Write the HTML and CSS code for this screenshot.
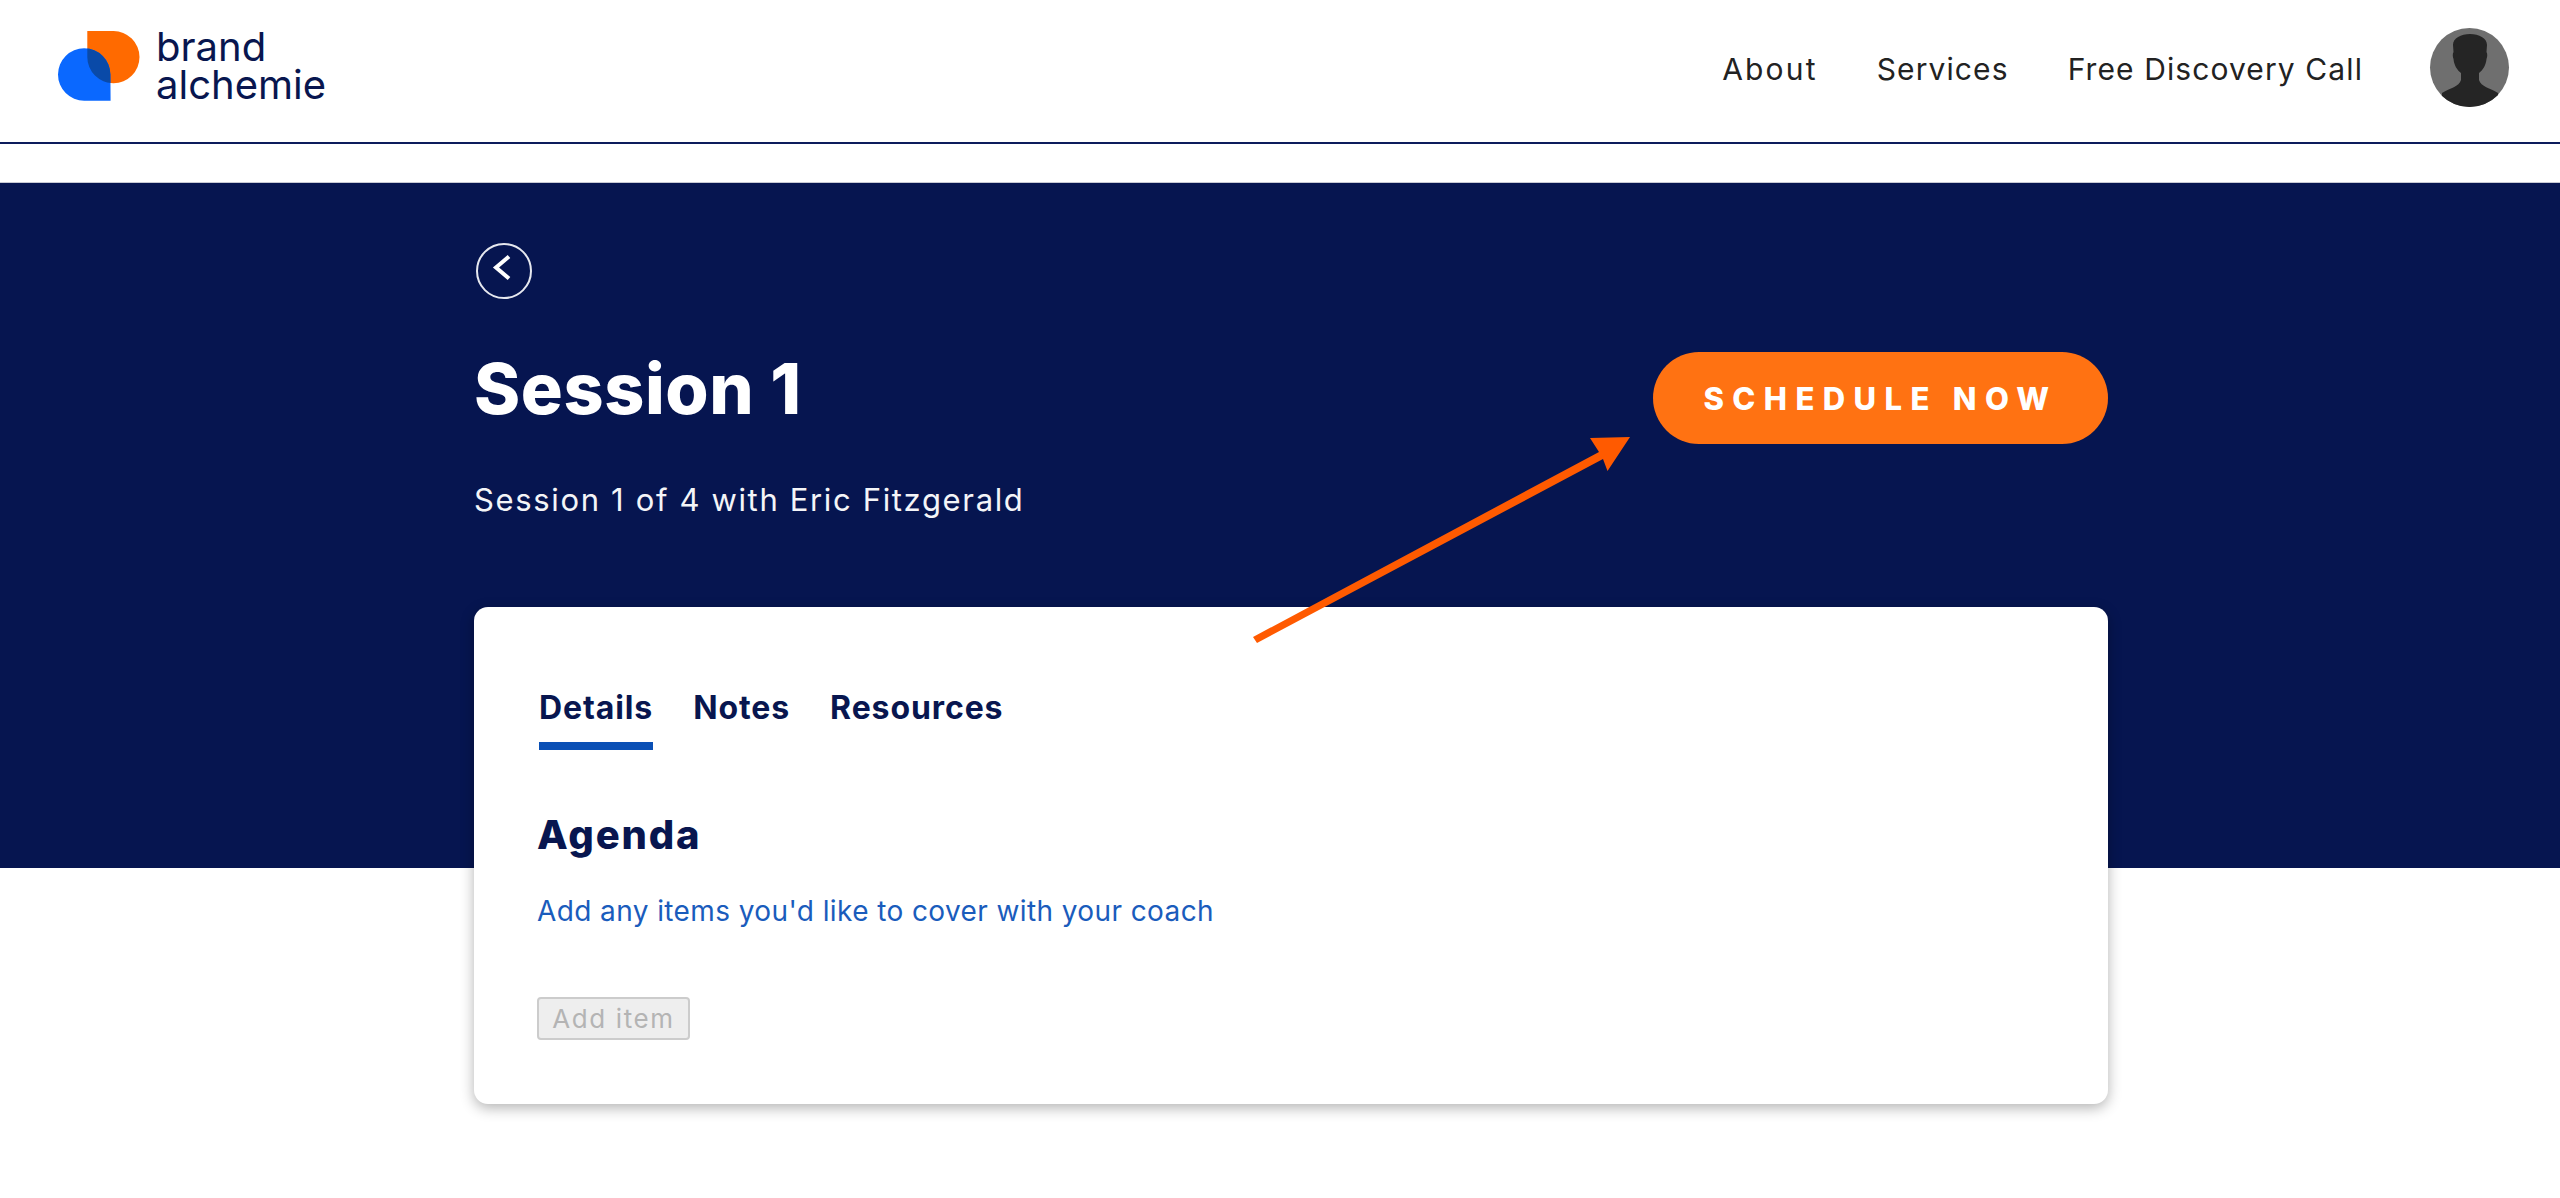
FILE: index.html
```html
<!DOCTYPE html>
<html lang="en">
<head>
<meta charset="utf-8">
<title>Session 1</title>
<link rel="stylesheet" href="styles.css">
</head>
<body>
<header class="topbar">
  <a class="brand">
    <svg class="brand-mark" viewBox="0 0 82 70" width="82" height="70">
      <defs><clipPath id="blueclip"><path d="M52.6 69.7H26.2A26.2 26.2 0 1 1 52.4 43.5Z"/></clipPath></defs>
      <path fill="#ff6a00" d="M29.3 0H55.2A26.1 26.1 0 1 1 29.3 26.1Z"/>
      <path fill="#0a68ff" d="M52.6 69.7H26.2A26.2 26.2 0 1 1 52.4 43.5Z"/>
      <path fill="#0a4aa8" clip-path="url(#blueclip)" d="M29.3 0H55.2A26.1 26.1 0 1 1 29.3 26.1Z"/>
    </svg>
    <span class="brand-name">brand<br>alchemie</span>
  </a>
  <nav class="nav">
    <a class="nav-wide">About</a>
    <a>Services</a>
    <a>Free Discovery Call</a>
  </nav>
  <div class="avatar">
    <svg viewBox="0 0 79 79" width="79" height="79">
      <path fill="#252525" d="M12 65C20 60 29 59 31 52V45C27 42 24 37 23.500 31C22.500 28 22.500 26 23.500 24L23 17C23 10 31 6 40 6C49 6 57 10 57 17L56.500 24C57.500 26 57.500 28 56.500 31C56 37 53 42 49 45V52C51 59 60 60 68 65V79H12Z"/>
    </svg>
  </div>
</header>

<section class="hero">
  <div class="wrap">
    <a class="back">
      <svg viewBox="0 0 56 56" width="56" height="56">
        <circle cx="28" cy="28" r="27" fill="none" stroke="#e6e8ef" stroke-width="2"/>
        <path d="M33 13.500L20 24.500L33 35.500" fill="none" stroke="#fff" stroke-width="4"/>
      </svg>
    </a>
    <div class="hero-row">
      <div>
        <h1 class="title">Session 1</h1>
        <p class="subtitle">Session 1 of 4 with Eric Fitzgerald</p>
      </div>
      <a class="cta">SCHEDULE NOW</a>
    </div>
  </div>
</section>

<main class="card">
  <div class="tabs">
    <a class="tab active">Details</a>
    <a class="tab">Notes</a>
    <a class="tab">Resources</a>
  </div>
  <h2 class="agenda">Agenda</h2>
  <p class="hint">Add any items you'd like to cover with your coach</p>
  <button class="add" disabled>Add item</button>
</main>

<svg class="arrow" viewBox="0 0 2560 1198" width="2560" height="1198">
  <path fill="#ff5a00" d="M1253 637L1599 452L1590 438L1630 437L1607.500 471L1603 459L1257 643Z"/>
</svg>
</body>
</html>
```
FILE: styles.css
```css
* { box-sizing: border-box; }
html, body { margin: 0; padding: 0; }
body {
  position: relative;
  height: 1198px;
  overflow: hidden;
  background: #fff;
  font-family: Inter, "Open Sans", "Liberation Sans", sans-serif;
  color: #222;
}
.topbar {
  height: 144px;
  border-bottom: 2px solid #0d1c5c;
  display: flex;
  align-items: center;
  padding: 0 51px 0 58px;
}
.brand { display: flex; align-items: center; gap: 16px; margin-bottom: 10px; }
.brand-mark { display: block; }
.brand-name {
  font-size: 40px;
  line-height: 38px;
  letter-spacing: 0;
  font-weight: 400;
  color: #08164f;
}
.nav {
  margin-left: auto;
  display: flex;
  gap: 59px;
  font-size: 30px;
  font-weight: 400;
  letter-spacing: 1.1px;
  margin-bottom: 4px;
}
.nav-wide { letter-spacing: 2.2px; }
.avatar {
  margin-left: 67px;
  width: 79px;
  height: 79px;
  border-radius: 50%;
  overflow: hidden;
  background: #6f6f6f;
  margin-bottom: 7px;
}
.avatar svg { display: block; }
.hero {
  margin-top: 38px;
  height: 686px;
  background: #061550;
  border-top: 1px solid #c8cad4;
  color: #fff;
}
.wrap { width: 1634px; margin-left: 474px; padding-top: 60px; }
.back { display: block; width: 56px; height: 56px; margin-left: 2px; }
.back svg { display: block; }
.hero-row { display: flex; justify-content: space-between; align-items: flex-start; margin-top: 48px; }
.title {
  margin: 0;
  font-size: 70px;
  line-height: 84px;
  font-weight: 800;
  letter-spacing: 0.6px;
  color: #fff;
}
.subtitle {
  margin: 49px 0 0;
  font-size: 31px;
  line-height: 40px;
  font-weight: 400;
  letter-spacing: 1.65px;
  color: #f4f5f8;
}
.cta {
  width: 455px;
  height: 92px;
  margin-top: 5px;
  border-radius: 46px;
  background: #ff7212;
  color: #fff;
  font-size: 31px;
  font-weight: 800;
  letter-spacing: 8.4px;
  display: flex;
  align-items: center;
  justify-content: center;
}
.card {
  position: relative;
  width: 1634px;
  height: 497px;
  margin: -261px 0 0 474px;
  background: #fff;
  border-radius: 14px;
  box-shadow: 0 4px 14px rgba(0, 0, 0, .3);
  padding: 81px 63px 0;
}
.tabs { display: flex; gap: 40px; margin-left: 2px; }
.tab {
  display: block;
  height: 54px;
  font-size: 32px;
  line-height: 40px;
  font-weight: 700;
  letter-spacing: 0.9px;
  color: #08164f;
}
.tab.active { border-bottom: 8px solid #0a4fb5; height: 62px; }
.agenda {
  margin: 60px 0 0;
  font-size: 40px;
  line-height: 50px;
  font-weight: 800;
  letter-spacing: 1.8px;
  color: #08164f;
}
.hint {
  margin: 33px 0 0;
  font-size: 28px;
  line-height: 36px;
  font-weight: 400;
  letter-spacing: 0.4px;
  color: #1a5cbc;
}
.add {
  display: block;
  margin-top: 68px;
  width: 153px;
  height: 43px;
  padding: 0;
  font-family: inherit;
  font-size: 26px;
  letter-spacing: 1.6px;
  color: #b4b4b4;
  background: #eee;
  border: 2px solid #ccc;
  border-radius: 4px;
}
.arrow { position: absolute; left: 0; top: 0; pointer-events: none; }
```
